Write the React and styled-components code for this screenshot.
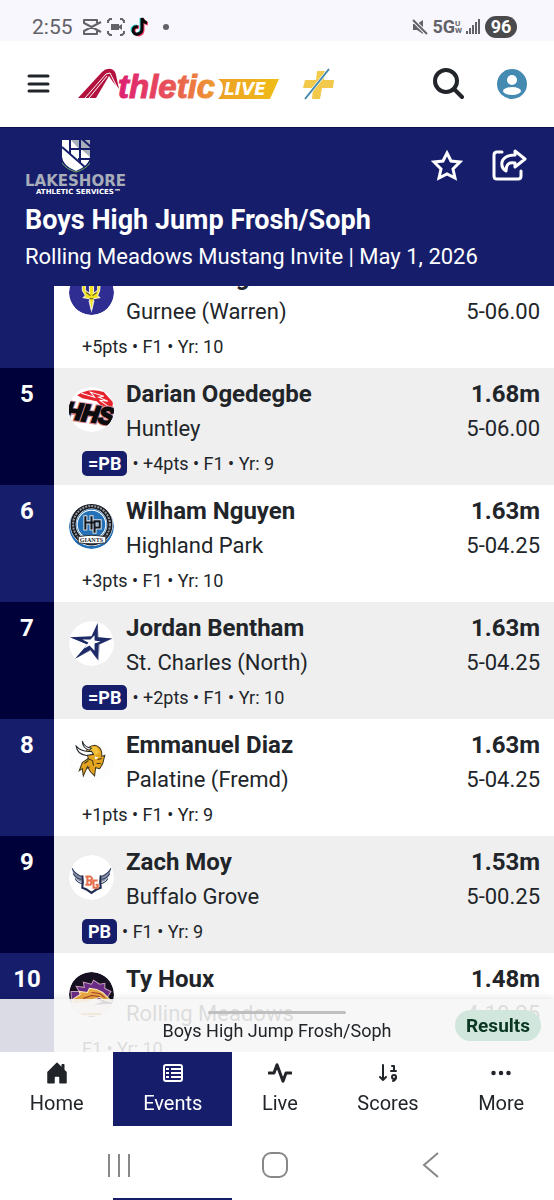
import React, { useLayoutEffect, useRef } from "react";
import styled, { createGlobalStyle } from "styled-components";
import { BsActivity, BsHouseDoorFill, BsThreeDots } from "react-icons/bs";

const results = [
  { place: 4, name: "Lucas Long", school: "Gurnee (Warren)", metric: "1.68m", feet: "5-06.00", meta: "+5pts • F1 • Yr: 10", logo: "warren" },
  { place: 5, name: "Darian Ogedegbe", school: "Huntley", metric: "1.68m", feet: "5-06.00", badge: "=PB", meta: "+4pts • F1 • Yr: 9", logo: "huntley" },
  { place: 6, name: "Wilham Nguyen", school: "Highland Park", metric: "1.63m", feet: "5-04.25", meta: "+3pts • F1 • Yr: 10", logo: "highland" },
  { place: 7, name: "Jordan Bentham", school: "St. Charles (North)", metric: "1.63m", feet: "5-04.25", badge: "=PB", meta: "+2pts • F1 • Yr: 10", logo: "charles" },
  { place: 8, name: "Emmanuel Diaz", school: "Palatine (Fremd)", metric: "1.63m", feet: "5-04.25", meta: "+1pts • F1 • Yr: 9", logo: "fremd" },
  { place: 9, name: "Zach Moy", school: "Buffalo Grove", metric: "1.53m", feet: "5-00.25", badge: "PB", meta: "F1 • Yr: 9", logo: "buffalo" },
  { place: 10, name: "Ty Houx", school: "Rolling Meadows", metric: "1.48m", feet: "4-10.25", meta: "F1 • Yr: 10", logo: "meadows" },
];

const logos = {
  warren: (
    <>
      <circle cx="22" cy="22" r="22" fill="#2f2d92" />
      <path d="M22 42l-3-12h6z" fill="#c9cfe4" />
      <path d="M13 8l3 3v9l4 3V9l2-5 2 5v14l4-3v-9l3-3-1 12-2 5 2 2-6 1-1 7-1 4-1-4-1-7-6-1 2-2-3-5z" fill="#f2e21c" stroke="#f5f0c8" strokeWidth="1" />
      <path d="M17 22l4 3M27 22l-4 3M20 28h4" fill="none" stroke="#55512f" strokeWidth="1" />
    </>
  ),
  huntley: (
    <>
      <circle cx="22" cy="22" r="22" fill="#fff" />
      <path d="M8 8Q20 0 34 5l9 10-1 8-9-3-6-6-14-3z" fill="#e5242e" />
      <path d="M12 6l13 4-4-5 13 4-5 1 9 4-8-1 10 7" fill="none" stroke="#fff" strokeWidth="1" />
      <text x="21" y="34" transform="rotate(8 22 22)" textAnchor="middle" fontFamily="Liberation Sans, sans-serif" fontSize="23" fontWeight="700" fontStyle="italic" fill="#0c0c0e" stroke="#d88d94" strokeWidth="4" paintOrder="stroke">HHS</text>
      <text x="21" y="34" transform="rotate(8 22 22)" textAnchor="middle" fontFamily="Liberation Sans, sans-serif" fontSize="23" fontWeight="700" fontStyle="italic" fill="#0c0c0e" stroke="#0c0c0e" strokeWidth="2" aria-hidden="true">HHS</text>
    </>
  ),
  highland: (
    <>
      <circle cx="22" cy="22" r="22" fill="#2471b8" />
      <circle cx="22" cy="20" r="18" fill="none" stroke="#fff" strokeWidth="6" />
      <circle cx="22" cy="20" r="18" fill="none" stroke="#17191d" strokeWidth="5" />
      <circle cx="22" cy="20" r="18" fill="none" stroke="#9297a0" strokeWidth="2" strokeDasharray="2 1" />
      <circle cx="22" cy="20" r="14" fill="#2471b8" stroke="#fff" strokeWidth="1" />
      <g fill="none" strokeLinecap="square">
        <path d="M16 13v11M22 13v11M16 18h7M25 17h5v6h-5M25 17v10" stroke="#d8dde4" strokeWidth="4" />
        <path d="M16 13v11M22 13v11M16 18h7M25 17h5v6h-5M25 17v10" stroke="#111820" strokeWidth="2" />
      </g>
      <path d="M9 32q13-3 27 0v6q-14 2-27 0z" fill="#fff" stroke="#30343a" />
      <text x="22" y="37" textAnchor="middle" fontFamily="Liberation Serif, serif" fontWeight="700" fontSize="6" fill="#25282c">GIANTS</text>
    </>
  ),
  charles: (
    <>
      <circle cx="22" cy="22" r="22" fill="#fff" />
      <path d="M28 2l1 14 14 1-13 6-1 16-8-10-15 8 12-14-17-7 22 0z" fill="#9097b3" />
      <path d="M28 2l0 14 14 1-13 6-1 15-7-10-15 9 12-14-17-7 21-1z" fill="#1d2a66" />
      <path d="M25 14l0 5 6 1-6 2 0 7-5-5-5 3 4-6-6-3 8 0z" fill="#fff" />
    </>
  ),
  fremd: (
    <>
      <circle cx="22" cy="22" r="22" fill="#fdfdfd" />
      <path d="M17 14q0-6 8-7 6 1 7 7l0 4 3-1-2 8-3 5-4-1-1 8-4-4-3-5-4 9-1-7-3 2 3-8 6-4z" fill="#e5a41f" stroke="#40371f" strokeWidth="1" />
      <path d="M18 12q3-5 9-3l3 5-5 3-6-2z" fill="#f4c13a" />
      <path d="M7 8q1 8 10 9l7-1-2-3Q12 14 7 8zM13 3q0 7 7 9l2-2Q15 9 13 3z" fill="#fff" stroke="#22262b" strokeWidth="1" />
      <path d="M18 20l5 2 1 5M15 25l4-3M28 21l4-1M27 25l4 0M20 28l-2 2" fill="none" stroke="#403719" strokeWidth="1" />
      <path d="M25 18l4 1-3 2z" fill="#fff" />
    </>
  ),
  buffalo: (
    <>
      <circle cx="22" cy="22" r="22" fill="#fff" />
      <path d="M3 13q2 5 10 8v6Q4 24 3 13zM41 13q-2 5-10 8v6q9-3 10-14z" fill="#8b93a8" />
      <path d="M13 28q-5-1-7-5M4 18q2 4 8 6M3 13q2 5 9 8M31 28q5-1 7-5M40 18q-2 4-8 6M41 13q-2 5-9 8" fill="none" stroke="#344063" strokeWidth="1" />
      <path d="M13 20q1 6 0 12 4 1 9 5 5-4 9-5-1-6 0-12" fill="none" stroke="#202a4c" strokeWidth="2" />
      <g fill="none" stroke="#e6704c" strokeWidth="2">
        <path d="M16 21h5q3 2 0 4h-3M18 21v8M16 29h5q2-2 0-4M28 25h-4v7h4v-3h-2" />
      </g>
    </>
  ),
  meadows: (
    <>
      <circle cx="22" cy="22" r="22" fill="#171020" />
      <path d="M2 19l8 0-3-5 8 1-1-5 8 2 2-4 6 4 5-1 0 5 6 3-3 5-35 14z" fill="#6b2c86" stroke="#c79fbd" />
      <path d="M3 27l8-5-1-3 8 1 2-4 7 1 6 3 6 6 3 3-6-1-6-3-7 2-5 3-14 4z" fill="#ecaa42" stroke="#fff0c0" />
      <path d="M22 20l8 1 5 4M14 26l8-3 8 1" fill="none" stroke="#a33c31" strokeWidth="1" />
      <path d="M0 31l18-2 7-3 8 3-9 3 19-1-4 12H8z" fill="#f8ecdc" />
      <path d="M12 41h20" stroke="#d18b28" strokeWidth="2" />
    </>
  ),
};

const BrandLogo = () => (
  <svg width="201" height="32" viewBox="0 0 201 32" role="img" aria-label="Athletic Live">
    <defs>
      <linearGradient id="brand" gradientUnits="userSpaceOnUse" x1="38" y1="0" x2="140" y2="0">
        <stop offset="0" stopColor="#dc1d72" />
        <stop offset="0.5" stopColor="#e8505a" />
        <stop offset="1" stopColor="#efa02c" />
      </linearGradient>
      <linearGradient id="live" x1="0" x2="1">
        <stop offset="0" stopColor="#eda026" />
        <stop offset="1" stopColor="#efbd16" />
      </linearGradient>
    </defs>
    <path d="M0 30L24 4Q28 0 33 1q4 1 5 6l3 14-6-7-4-6-13 22z" fill="#b3123f" />
    <path d="M7 30L28 6l4-1 8 16M11 30L29 8" fill="none" stroke="#fff" strokeWidth="1" />
    <text x="40" y="30" fontFamily="Liberation Sans, Arial, sans-serif" fontSize="33" fontWeight="700" fontStyle="italic" fill="url(#brand)" stroke="url(#brand)" strokeWidth="1">thletic</text>
    <path d="M140 11h61l-9 20h-52q5-5 5-11 0-6-5-9z" fill="url(#live)" />
    <text x="146" y="27" fontFamily="DejaVu Sans, sans-serif" fontSize="17" fontWeight="700" fontStyle="italic" fill="#fff">LIVE</text>
  </svg>
);

const PlusLogo = () => (
  <svg width="32" height="32" viewBox="0 0 32 32" aria-hidden="true">
    <path d="M14 3h8l-1 9h10l-1 8H19l-2 11H9l1-11H0l2-8h11z" fill="#f3c94b" />
    <path d="M26 1L2 31" stroke="#fff" strokeWidth="3" />
    <path d="M26 1L2 31" stroke="#3f88ac" strokeWidth="2" />
  </svg>
);

const SponsorLogo = () => (
  <svg width="105" height="56" viewBox="0 0 105 56" role="img" aria-label="Lakeshore Athletic Services">
    <path d="M37 0h28v17q-1 9-14 14-13-5-14-14z" fill="#fff" />
    <path d="M46 0h8v9zM56 0h9v17l-9-8z" fill="#a9b0b9" />
    <path d="M37 7l24 21M45 0v14M55 0v23M45 9h21M53 19h12M57-1l9 8" fill="none" stroke="#161e6c" strokeWidth="2" />
    <path d="M37 23q4 6 14 9 10-3 14-9" fill="none" stroke="#72ad59" strokeWidth="1" />
    <text x="0" y="46" fontFamily="DejaVu Sans, sans-serif" fontSize="15" fontWeight="700" fill="#a8adba">LAKESHORE</text>
    <text x="11" y="54" fontFamily="DejaVu Sans, sans-serif" fontSize="7" fontWeight="700" fill="#fff">ATHLETIC SERVICES™</text>
  </svg>
);

const App = () => {
  const listRef = useRef(null);

  useLayoutEffect(() => {
    // keep the tail of fourth place in view under the event header
    listRef.current.scrollTop = 35;
  }, []);

  return (
    <Screen>
      <GlobalStyle />
      <StatusBar>
        <StatusGroup>
          <Clock>2:55</Clock>
          <svg width="20" height="16" viewBox="0 0 20 16" fill="none" stroke="#626268" strokeWidth="2" strokeLinejoin="round" aria-hidden="true">
            <path d="M19 3L2 12v3h13v-3M19 13L2 4V1h13v3" />
          </svg>
          <svg width="18" height="18" viewBox="0 0 18 18" fill="none" stroke="#626268" strokeWidth="2" aria-hidden="true">
            <path d="M1 5V3l2-2h2M13 1h2l2 2v2M17 13v2l-2 2h-2M5 17H3l-2-2v-2" />
            <path d="M4 6h8v6H4zM12 8l3-2v6l-3-2z" fill="#626268" stroke="none" />
          </svg>
          <svg width="18" height="20" viewBox="0 0 18 20" fill="none" strokeWidth="3" aria-hidden="true">
            <path d="M7 9q-5 0-5 4 1 4 5 4 4-1 4-5V1q1 4 5 5" stroke="#39dcd8" />
            <path d="M9 10q-5 0-5 4 1 4 5 4 4-1 4-5V2q1 4 5 5" stroke="#f13d65" />
            <path d="M8 10q-5-1-5 4 1 4 5 3 4-1 4-5V1q1 4 5 5" stroke="#0a0a0d" />
          </svg>
          <Dot />
        </StatusGroup>
        <Signals>
          <svg width="16" height="16" viewBox="0 0 16 16" aria-hidden="true">
            <path d="M1 5h4l6-4v14l-6-4H1z" fill="#626268" />
            <path d="M0 0l16 16" stroke="#f8f7fd" strokeWidth="4" />
            <path d="M1 1l14 14" stroke="#626268" strokeWidth="2" />
          </svg>
          <Network>5G<Band><span>U</span><span>W</span></Band></Network>
          <svg width="15" height="15" viewBox="0 0 15 15" stroke="#626268" strokeWidth="2" aria-hidden="true">
            <path d="M1 15v-3M4 15V9M7 15V6M10 15V3M13 15V0" />
          </svg>
          <Battery>96</Battery>
        </Signals>
      </StatusBar>

      <AppBar>
        <IconButton aria-label="Menu">
          <svg width="36" height="32" viewBox="0 0 36 32" stroke="currentColor" strokeWidth="3" strokeLinecap="round" aria-hidden="true">
            <path d="M9 8h19M9 16h19M9 23h19" />
          </svg>
        </IconButton>
        <Brand href="#home"><BrandLogo /></Brand>
        <PlusLink href="#plus" aria-label="Plus"><PlusLogo /></PlusLink>
        <IconButton aria-label="Search">
          <svg width="32" height="32" viewBox="0 0 32 32" fill="none" stroke="currentColor" strokeWidth="4" strokeLinecap="round" aria-hidden="true">
            <circle cx="14" cy="13" r="11" />
            <path d="M22 21l8 8" />
          </svg>
        </IconButton>
        <IconButton aria-label="Account">
          <svg width="32" height="32" viewBox="0 0 32 32" aria-hidden="true">
            <circle cx="16" cy="16" r="15" fill="#458bb1" />
            <circle cx="16" cy="12" r="5" fill="#fff" />
            <ellipse cx="16" cy="23" rx="9" ry="4" fill="#fff" />
          </svg>
        </IconButton>
      </AppBar>

      <EventHeader>
        <HeaderTop>
          <SponsorLogo />
          <HeaderActions>
            <IconButton aria-label="Favorite">
              <svg width="32" height="32" viewBox="0 0 32 32" fill="none" stroke="currentColor" strokeWidth="3" aria-hidden="true">
                <path d="M16 4l4 8 9 1-7 7 2 9-8-4-8 4 2-9-7-7 9-1z" />
              </svg>
            </IconButton>
            <IconButton aria-label="Share">
              <svg width="35" height="32" viewBox="0 0 35 32" fill="none" stroke="currentColor" strokeWidth="3" strokeLinejoin="round" strokeLinecap="round" aria-hidden="true">
                <path d="M10 3H5Q2 3 2 6v21q0 3 3 3h21q3 0 3-3v-5" />
                <path d="M23 2l10 8-10 8v-4q-9-2-9 8-5-3-4-9 2-7 13-7z" />
              </svg>
            </IconButton>
          </HeaderActions>
        </HeaderTop>
        <EventTitle>Boys High Jump Frosh/Soph</EventTitle>
        <EventMeet>Rolling Meadows Mustang Invite | May 1, 2026</EventMeet>
      </EventHeader>

      <ListArea>
        <ResultList ref={listRef}>
          {results.map((r) => (
            <ResultRow key={r.place} $shaded={r.place % 2 === 1}>
              <Place $shaded={r.place % 2 === 1}>{r.place}</Place>
              <RowBody>
                <RowMain>
                  <TeamLogo viewBox="0 0 44 44" aria-hidden="true">{logos[r.logo]}</TeamLogo>
                  <Athlete>
                    <Name>{r.name}</Name>
                    <School>{r.school}</School>
                  </Athlete>
                  <Marks>
                    <Name as="span">{r.metric}</Name>
                    <School>{r.feet}</School>
                  </Marks>
                </RowMain>
                <Meta>
                  {r.badge && <Badge>{r.badge}</Badge>}
                  {r.badge ? "• " + r.meta : r.meta}
                </Meta>
              </RowBody>
            </ResultRow>
          ))}
        </ResultList>
        <Drawer>
          <Handle />
          <DrawerTitle>Boys High Jump Frosh/Soph</DrawerTitle>
          <Status>Results</Status>
        </Drawer>
      </ListArea>

      <Footer>
        <Tabs>
          <Tab href="#home"><BsHouseDoorFill size={24} />Home</Tab>
          <Tab href="#events" $active>
            <svg width="24" height="24" viewBox="0 0 24 24" fill="none" stroke="currentColor" strokeWidth="2" aria-hidden="true">
              <rect x="3" y="4" width="18" height="16" rx="2" />
              <path d="M5 8h3M10 8h10M5 12h3M10 12h10M5 16h3M10 16h10" />
            </svg>
            Events
          </Tab>
          <Tab href="#live"><BsActivity size={24} strokeWidth={1} />Live</Tab>
          <Tab href="#scores">
            <svg width="24" height="24" viewBox="0 0 24 24" fill="none" stroke="currentColor" strokeWidth="2" strokeLinecap="round" strokeLinejoin="round" aria-hidden="true">
              <path d="M7 4v15M4 16l3 3 3-3" />
              <path d="M16 5h2v5M15 10h5" />
              <circle cx="18" cy="16" r="2" />
              <path d="M20 16q0 3-3 4" />
            </svg>
            Scores
          </Tab>
          <Tab href="#more"><BsThreeDots size={24} />More</Tab>
        </Tabs>
        <SystemNav>
          <SystemButton aria-label="Recent apps">
            <svg width="26" height="26" viewBox="0 0 26 26" stroke="#88888b" strokeWidth="2"><path d="M3 2v23M13 2v23M23 2v23" /></svg>
          </SystemButton>
          <SystemButton aria-label="Home screen">
            <svg width="26" height="26" viewBox="0 0 26 26" fill="none" stroke="#88888b" strokeWidth="2"><rect x="1" y="1" width="24" height="24" rx="8" /></svg>
          </SystemButton>
          <SystemButton aria-label="Back">
            <svg width="26" height="26" viewBox="0 0 26 26" fill="none" stroke="#88888b" strokeWidth="2"><path d="M20 1L6 13l14 12" /></svg>
          </SystemButton>
        </SystemNav>
      </Footer>
    </Screen>
  );
};

export default App;

const GlobalStyle = createGlobalStyle`
  * {
    box-sizing: border-box;
  }

  body {
    margin: 0;
    background: #fff;
    color: #212529;
    font-family: Roboto, "Liberation Sans", sans-serif;
  }

  svg {
    flex-shrink: 0;
    display: block;
  }
`;

const Screen = styled.div`
  height: 100vh;
  display: flex;
  flex-direction: column;
  overflow: hidden;
`;

const StatusBar = styled.div`
  display: flex;
  justify-content: space-between;
  align-items: center;
  height: 41px;
  padding: 12px 37px 0 32px;
  background: #f8f7fd;
  color: #626268;
`;

const StatusGroup = styled.div`
  display: flex;
  align-items: center;
  gap: 5px;
`;

const Clock = styled.span`
  font-size: 21px;
  line-height: 24px;
  margin-right: 4px;
`;

const Dot = styled.span`
  width: 6px;
  height: 6px;
  margin-left: 10px;
  border-radius: 50%;
  background: #626268;
`;

const Signals = styled(StatusGroup)`
  gap: 4px;
`;

const Network = styled.span`
  display: flex;
  align-items: center;
  font-size: 18px;
  font-weight: 700;
`;

const Band = styled.span`
  display: flex;
  flex-direction: column;
  font-size: 8px;
  line-height: 7px;
`;

const Battery = styled.span`
  width: 32px;
  border-radius: 11px;
  background: #4a4a4d;
  color: #fff;
  font-size: 18px;
  font-weight: 700;
  line-height: 22px;
  text-align: center;
`;

const AppBar = styled.header`
  display: flex;
  align-items: center;
  height: 86px;
  padding: 0 26px 0 20px;
`;

const IconButton = styled.button`
  display: flex;
  padding: 0;
  border: 0;
  background: none;
  color: inherit;
  cursor: pointer;
`;

const Brand = styled.a`
  margin-left: 22px;
`;

const PlusLink = styled.a`
  margin: 0 auto 0 24px;

  & ~ ${IconButton} + ${IconButton} {
    margin-left: 32px;
  }
`;

const EventHeader = styled.section`
  padding: 12px 27px 9px 25px;
  border-top: 1px solid #0a0f4e;
  background: #161e6c;
  color: #fff;
`;

const HeaderTop = styled.div`
  display: flex;
  justify-content: space-between;
`;

const HeaderActions = styled.div`
  display: flex;
  align-items: flex-start;
  gap: 29px;
  padding-top: 9px;
`;

const EventTitle = styled.h1`
  margin: 7px 0 0;
  font-size: 27px;
  font-weight: 700;
  line-height: 34px;
`;

const EventMeet = styled.p`
  margin: 0;
  font-size: 22px;
  line-height: 40px;
`;

const ListArea = styled.main`
  position: relative;
  flex: 1;
  min-height: 0;
`;

const ResultList = styled.ol`
  height: 100%;
  margin: 0;
  padding: 0;
  list-style: none;
  overflow-y: auto;
  scrollbar-width: none;
`;

const ResultRow = styled.li`
  display: flex;
  background: ${(props) => (props.$shaded ? "#efefef" : "#fff")};
`;

const Place = styled.div`
  width: 54px;
  padding-top: 9px;
  background: ${(props) => (props.$shaded ? "#00003b" : "#161e6c")};
  color: #fff;
  font-size: 24px;
  font-weight: 700;
  line-height: 34px;
  text-align: center;
`;

const RowBody = styled.div`
  flex: 1;
  padding: 9px 14px 6px 15px;
`;

const RowMain = styled.div`
  display: flex;
`;

const TeamLogo = styled.svg`
  width: 45px;
  height: 45px;
  margin: 10px 12px 0 0;
  border-radius: 50%;
`;

const Athlete = styled.div`
  flex: 1;
`;

const Name = styled.div`
  display: block;
  font-size: 24px;
  font-weight: 700;
  line-height: 34px;
`;

const School = styled.div`
  font-size: 22px;
  line-height: 36px;
`;

const Marks = styled.div`
  text-align: right;
`;

const Meta = styled.div`
  display: flex;
  align-items: center;
  gap: 5px;
  height: 32px;
  padding-left: 13px;
  font-size: 18px;
`;

const Badge = styled.span`
  padding: 0 6px;
  border-radius: 5px;
  background: #161e6c;
  color: #fff;
  font-weight: 700;
  line-height: 25px;
`;

const Drawer = styled.div`
  position: absolute;
  right: 0;
  bottom: 0;
  left: 0;
  display: grid;
  grid-template-columns: 1fr auto 1fr;
  align-items: center;
  height: 53px;
  padding: 0 13px;
  background: rgba(246, 246, 246, 0.88);
  box-shadow: 0 0 8px rgba(0, 0, 0, 0.15);
`;

const Handle = styled.span`
  position: absolute;
  top: 12px;
  left: 50%;
  width: 138px;
  height: 3px;
  transform: translateX(-50%);
  border-radius: 2px;
  background: #bfbfbf;
`;

const DrawerTitle = styled.span`
  grid-column: 2;
  padding-top: 10px;
  font-size: 18px;
`;

const Status = styled.span`
  justify-self: end;
  padding: 0 11px;
  border-radius: 16px;
  background: #d1e7dd;
  color: #0a3622;
  font-size: 19px;
  font-weight: 700;
  line-height: 31px;
`;

const Footer = styled.footer`
  position: relative;
  background: #fff;
`;

const Tabs = styled.nav`
  display: flex;
  height: 148px;
`;

const Tab = styled.a`
  display: flex;
  flex: 1 1 auto;
  flex-direction: column;
  align-items: center;
  gap: 3px;
  padding-top: 9px;
  background: ${(props) => (props.$active ? "#161e6c" : "#fff")};
  color: ${(props) => (props.$active ? "#fff" : "#212529")};
  font-size: 20px;
  line-height: 30px;
  text-decoration: none;
`;

/* the phone's own buttons sit over the lower end of the tab bar */
const SystemNav = styled.div`
  position: absolute;
  right: 0;
  bottom: 2px;
  left: 0;
  display: flex;
  justify-content: space-between;
  align-items: center;
  height: 72px;
  padding: 6px 110px 0 106px;
  background: #fff;
`;

const SystemButton = styled(IconButton)`
  padding: 0;
`;
